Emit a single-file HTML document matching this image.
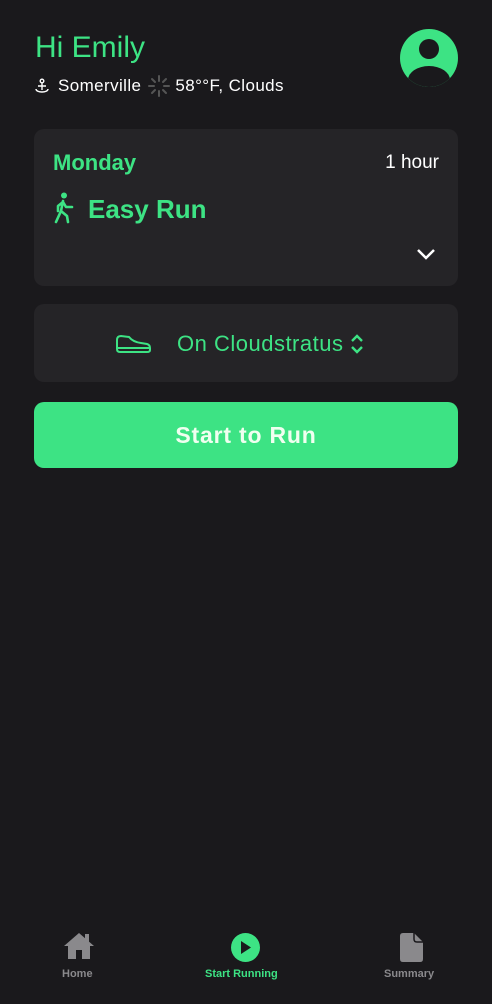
<!DOCTYPE html>
<html><head><meta charset="utf-8"><style>
*{margin:0;padding:0;box-sizing:border-box}
body{width:492px;height:1004px;background:#1a191c;font-family:"Liberation Sans",sans-serif;position:relative;overflow:hidden;color:#fff}
.g{color:#3de384}
.abs{position:absolute}
.card{position:absolute;left:34px;width:424px;background:#252427;border-radius:10px}
</style></head><body>
<div class="abs g" style="left:35px;top:31px;font-size:30px;">Hi Emily</div>
<div class="abs" style="left:34px;top:74px;font-size:17px;letter-spacing:0.4px;display:flex;align-items:center;">
<svg width="16" height="16" viewBox="0 0 16 16" style="margin-right:8px"><circle cx="8" cy="3" r="1.8" fill="none" stroke="#fff" stroke-width="1.4"/><path d="M8 5v7M2 11c0 2 3 3 6 3s6-1 6-3M4 8h8" fill="none" stroke="#fff" stroke-width="1.4"/></svg>
<span>Somerville</span>
<svg width="24" height="24" viewBox="0 0 24 24" style="margin:0 4px 0 6px"><g stroke="#555" stroke-width="2" stroke-linecap="round"><path d="M12 2v5M12 17v5M2 12h5M17 12h5M5 5l3 3M16 16l3 3M5 19l3-3M16 8l3-3"/></g></svg>
<span>58°°F, Clouds</span></div>
<div class="abs" style="left:400px;top:29px;width:58px;height:58px;border-radius:50%;background:#3de384;overflow:hidden">
<div class="abs" style="left:19px;top:10px;width:20px;height:20px;border-radius:50%;background:#1a191c"></div>
<div class="abs" style="left:8px;top:37px;width:42px;height:28px;border-radius:50%;background:#1a191c"></div></div>

<div class="card" style="top:129px;height:157px">
<div class="abs g" style="left:19px;top:21px;font-size:22px;font-weight:bold">Monday</div>
<div class="abs" style="right:19px;top:23px;font-size:19px">1 hour</div>
<svg class="abs" style="left:20px;top:63px" width="22" height="32" viewBox="0 0 22 32"><circle cx="10" cy="3.5" r="3" fill="#3de384"/><path d="M9 9 L7 19 L2 30 M7 19 L13 24 L14 30 M9 10 L4 14 L4 19 M9 10 L12 15 L18 15" fill="none" stroke="#3de384" stroke-width="2.6" stroke-linecap="round" stroke-linejoin="round"/></svg>
<div class="abs g" style="left:54px;top:65px;font-size:26px;font-weight:bold">Easy Run</div>
<svg class="abs" style="left:382px;top:118px" width="20" height="14" viewBox="0 0 20 14"><path d="M2 3l8 8 8-8" fill="none" stroke="#fff" stroke-width="2.5"/></svg>
</div>

<div class="card" style="top:304px;height:78px">
<svg class="abs" style="left:81px;top:30px" width="37" height="20" viewBox="0 0 37 20"><path d="M2 6 Q2 2 6 2 L14 3 Q18 8 26 9 L32 10 Q35 11 35 14 L35 16 Q35 18 32 18 L5 18 Q2 18 2 15 Z M2 14 H35" fill="none" stroke="#3de384" stroke-width="2"/></svg>
<div class="abs g" style="left:143px;top:27px;font-size:22px;letter-spacing:0.5px">On Cloudstratus</div>
<svg class="abs" style="left:316px;top:29px" width="14" height="22" viewBox="0 0 14 22"><path d="M2 8l5-5 5 5M2 14l5 5 5-5" fill="none" stroke="#3de384" stroke-width="2.4"/></svg>
</div>

<div class="abs" style="left:34px;top:402px;width:424px;height:66px;background:#3de384;border-radius:10px;text-align:center;line-height:66px;font-size:23px;letter-spacing:0.8px;font-weight:bold;color:#f0fff0">Start to Run</div>

<svg class="abs" style="left:62px;top:931px" width="34" height="30" viewBox="0 0 34 30"><path d="M17 2 L2 15 L6 15 L6 28 L28 28 L28 15 L32 15 Z" fill="#8a898c"/><rect x="23" y="3" width="4" height="8" fill="#8a898c"/><rect x="14" y="19" width="6" height="9" fill="#1a191c"/></svg>
<div class="abs" style="left:62px;top:968px;font-size:11px;font-weight:bold;color:#8a898c">Home</div>
<div class="abs" style="left:231px;top:933px;width:29px;height:29px;border-radius:50%;background:#3de384"></div>
<svg class="abs" style="left:240px;top:940px" width="12" height="15" viewBox="0 0 12 15"><path d="M1 1L11 7.5L1 14Z" fill="#1a191c"/></svg>
<div class="abs g" style="left:205px;top:968px;font-size:11px;font-weight:bold">Start Running</div>
<svg class="abs" style="left:399px;top:932px" width="25" height="31" viewBox="0 0 25 31"><path d="M4 1 H15 L24 10 V27 Q24 30 21 30 H4 Q1 30 1 27 V4 Q1 1 4 1Z" fill="#8a898c"/><path d="M15 1 V7 Q15 10 18 10 H24" fill="none" stroke="#1a191c" stroke-width="1.5"/></svg>
<div class="abs" style="left:384px;top:968px;font-size:11px;font-weight:bold;color:#8a898c">Summary</div>
</body></html>
